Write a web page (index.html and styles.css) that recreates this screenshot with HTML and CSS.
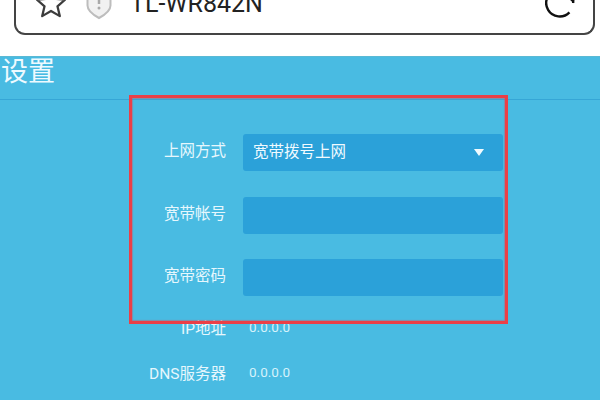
FILE: index.html
```html
<!DOCTYPE html>
<html lang="zh">
<head>
<meta charset="utf-8">
<title>设置</title>
<link rel="stylesheet" href="styles.css">
</head>
<body>
<div class="page">
  <header class="chrome">
    <div class="address">
      <svg class="star" viewBox="0 0 32 32" width="30" height="30"><path d="M16 1.500l4.300 10 10.700 1-8.100 7 2.500 10.500L16 24.500 6.600 30l2.500-10.500-8.100-7 10.700-1z" fill="none" stroke="#3c3c3c" stroke-width="2.400" stroke-linejoin="round"/></svg>
      <svg class="shield" viewBox="0 0 26 32" width="26" height="32"><path d="M1.500 3.500L13 0l11.500 3.500v14c0 5-5 9-11.500 12.500C6.500 26.500 1.500 22.500 1.500 17.500z" fill="#f1f1f1" stroke="#bdbdbd" stroke-width="2"/><path d="M13 6v10" stroke="#a8a8a8" stroke-width="2.500"/><circle cx="13" cy="20" r="1.500" fill="#a8a8a8"/></svg>
      <span class="host">TL-WR842N</span>
      <svg class="reload" viewBox="0 0 30 30" width="30" height="30"><path d="M27 9.500A13.500 13.500 0 1 0 27.500 19.500" fill="none" stroke="#111" stroke-width="2.400" transform="rotate(25 15 15)"/><path d="M22.500 8l5.500 5 1.500-7" fill="none" stroke="#111" stroke-width="2.400"/></svg>
    </div>
  </header>
  <main class="panel">
    <h1 class="title">设置</h1>
    <div class="form">
      <div class="row">
        <span class="label">上网方式</span>
        <div class="field select"><span class="choice">宽带拨号上网</span><i class="caret"></i></div>
      </div>
      <div class="row">
        <span class="label">宽带帐号</span>
        <div class="field"></div>
      </div>
      <div class="row">
        <span class="label">宽带密码</span>
        <div class="field"></div>
      </div>
      <div class="info first">
        <span class="label">IP地址</span>
        <span class="value">0.0.0.0</span>
      </div>
      <div class="info">
        <span class="label">DNS服务器</span>
        <span class="value">0.0.0.0</span>
      </div>
    </div>
    <div class="highlight"></div>
  </main>
</div>
</body>
</html>
```
FILE: styles.css
```css
* { box-sizing: border-box; }
html, body { margin: 0; padding: 0; background: #fff; }
body { font-family: Roboto, "Noto Sans CJK SC", sans-serif; }
.page { width: 600px; height: 400px; overflow: hidden; display: flex; flex-direction: column; }
.chrome { height: 56px; flex: none; padding: 0 5px 0 14px; }
.address {
  height: 35px;
  border: 2px solid #444;
  border-top: none;
  border-radius: 0 0 11px 11px;
  position: relative;
  overflow: hidden;
}
.star { position: absolute; left: 20px; top: -12px; }
.shield { position: absolute; left: 70px; top: -12px; }
.reload { position: absolute; right: 18px; top: -12px; }
.host { position: absolute; left: 114px; top: -14px; font-size: 25px; line-height: 36px; color: #222; }
.panel { position: relative; flex: 1; background: #49bbe2; border-top: 1px solid #5ab9d4; color: #e6f7fd; }
.title {
  margin: 0;
  height: 43px;
  padding-left: 1px;
  font-size: 27px;
  font-weight: 400;
  line-height: 30px;
  color: #eefaff;
  border-bottom: 1px solid #36a6d6;
}
.form { padding-top: 34px; display: flex; flex-direction: column; }
.row { display: flex; align-items: center; height: 37px; margin-bottom: 25.500px; }
.label { width: 226px; text-align: right; font-size: 15.500px; flex: none; padding-bottom: 7px; }
.info .label { padding-bottom: 2px; }
.field {
  margin-left: 17px;
  width: 260px;
  height: 37px;
  background: #2ba1d9;
  border-radius: 3px;
}
.select { display: flex; align-items: center; justify-content: space-between; padding: 0 19px 0 10px; font-size: 15.500px; color: #f0faff; }
.choice { padding-bottom: 6px; }
.caret { width: 0; height: 0; border: 5.500px solid transparent; border-top: 7px solid #f0fbff; border-bottom: 0; }
.info { display: flex; align-items: center; height: 24px; margin-bottom: 21px; }
.info.first { margin-top: -6px; }
.value { margin-left: 23px; font-size: 13.500px; color: #d5f2fb; padding-bottom: 1px; }
.highlight {
  position: absolute;
  left: 129px;
  top: 38px;
  width: 379px;
  height: 229px;
  border: 3px solid #ea3f47;
  box-shadow: inset 0 0 1px 0.500px rgba(234, 63, 71, 0.700);
}
```
